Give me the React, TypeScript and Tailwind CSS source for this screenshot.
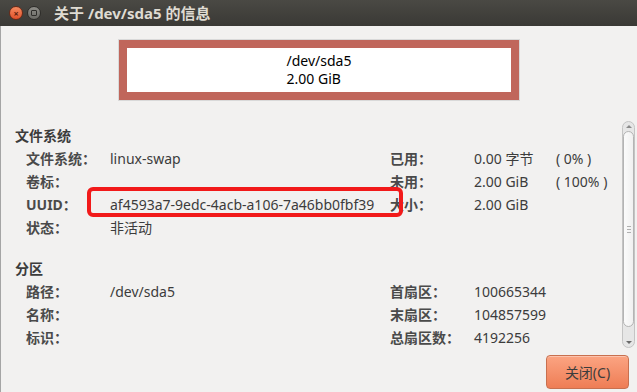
const font = "font-['Noto_Sans','Noto_Sans_CJK_SC',sans-serif]";

const fsRows = [
  { label: '文件系统：', value: 'linux-swap', rl: '已用：', rv: '0.00 字节', pct: '( 0% )' },
  { label: '卷标：', value: '', rl: '未用：', rv: '2.00 GiB', pct: '( 100% )' },
  { label: 'UUID：', value: 'af4593a7-9edc-4acb-a106-7a46bb0fbf39', rl: '大小：', rv: '2.00 GiB', pct: '' },
  { label: '状态：', value: '非活动', rl: '', rv: '', pct: '' },
];

const partRows = [
  { label: '路径：', value: '/dev/sda5', rl: '首扇区：', rv: '100665344', pct: '' },
  { label: '名称：', value: '', rl: '末扇区：', rv: '104857599', pct: '' },
  { label: '标识：', value: '', rl: '总扇区数：', rv: '4192256', pct: '' },
];

type Row = { label: string; value: string; rl: string; rv: string; pct: string };

function Section({ title, rows }: { title: string; rows: Row[] }) {
  return (
    <div>
      <div className="h-[23px] pl-[14px] flex items-center font-bold text-[14px] text-[#3c3c3c]">{title}</div>
      <div className="grid grid-cols-[84px_280px_84px_82px_auto] pl-[25px] text-[14px]">
        {rows.map((r, i) => (
          <div key={i} className="contents">
            <div className="h-[23px] flex items-center font-bold text-[#4a4a4a] whitespace-nowrap">{r.label}</div>
            <div className="h-[23px] flex items-center text-[#3c3c3c] whitespace-nowrap">{r.value}</div>
            <div className="h-[23px] flex items-center font-bold text-[#4a4a4a] whitespace-nowrap">{r.rl}</div>
            <div className="h-[23px] flex items-center text-[#3c3c3c] whitespace-nowrap">{r.rv}</div>
            <div className="h-[23px] flex items-center text-[#3c3c3c] whitespace-nowrap">{r.pct}</div>
          </div>
        ))}
      </div>
    </div>
  );
}

function Scrollbar() {
  return (
    <div className="w-[13px] h-[227px] mr-[2px] rounded-full border border-[#c4c4c4] bg-[#e6e6e6] flex flex-col items-center">
      <div className="h-[9px] flex items-center justify-center">
        <div className="w-0 h-0 border-l-[3px] border-r-[3px] border-b-[3px] border-l-transparent border-r-transparent border-b-[#8a8a8a]" />
      </div>
      <div className="w-[11px] h-[196px] rounded-full border border-[#b4b4b4] bg-gradient-to-r from-[#fbfbfb] to-[#f0f0f0] flex flex-col items-center justify-center gap-[2px]">
        <div className="w-[4px] h-px bg-[#b0b0b0]" />
        <div className="w-[4px] h-px bg-[#b0b0b0]" />
        <div className="w-[4px] h-px bg-[#b0b0b0]" />
      </div>
      <div className="flex-1" />
      <div className="h-[10px] flex items-center justify-center">
        <div className="w-0 h-0 border-l-[3px] border-r-[3px] border-t-[3px] border-l-transparent border-r-transparent border-t-[#6a6a6a]" />
      </div>
    </div>
  );
}

export default function App() {
  return (
    <div className={`w-[637px] h-[392px] overflow-hidden flex flex-col bg-[#f2f1f0] ${font}`}>
      {/* title bar */}
      <div className="h-[26px] shrink-0 flex items-center bg-gradient-to-b from-[#4a4944] to-[#3a3935]">
        <div className="ml-[9px] w-[14px] h-[14px] rounded-full bg-gradient-to-b from-[#f58a5f] to-[#e1502a] border border-[#6b2a18] flex items-center justify-center">
          <span className="text-[9px] leading-none font-bold text-[#5a1e0e]">×</span>
        </div>
        <div className="ml-[4px] w-[14px] h-[14px] rounded-full bg-gradient-to-b from-[#8e8d88] to-[#6b6a65] border border-[#2e2d2a] flex items-center justify-center">
          <div className="w-[6px] h-[6px] border border-[#2f2e2b] rounded-[1px]" />
        </div>
        <span className="ml-[13px] text-[15px] font-bold text-[#dfdbd2]">关于 /dev/sda5 的信息</span>
      </div>

      <div className="flex-1 flex flex-col border-l border-[#a5a5a5]">
        {/* disk graphic */}
        <div className="mt-[13px] self-center w-[402px] h-[62px] border border-[#d9d9d9] bg-[#c0665b] p-[8px]">
          <div className="h-full bg-white flex justify-center items-center">
            <div className="text-[14px] leading-[18px] text-black">
              <div>/dev/sda5</div>
              <div>2.00 GiB</div>
            </div>
          </div>
        </div>

        {/* scrolled info */}
        <div className="mt-[20px] flex relative">
          <div className="flex-1 pt-[3px] flex flex-col gap-[18px]">
            <Section title="文件系统" rows={fsRows} />
            <Section title="分区" rows={partRows} />
          </div>
          <Scrollbar />
          <div className="absolute left-[86px] top-[66px] w-[316px] h-[30px] border-[4px] border-[#f21a1a] rounded-[6px] pointer-events-none" />
        </div>

        {/* buttons */}
        <div className="mt-[6px] flex justify-end pr-[8px]">
          <button className="w-[83px] h-[34px] rounded-[4px] border border-[#c8704f] bg-gradient-to-b from-[#fba482] to-[#ee7d55] text-[14px] text-[#3c3c3c] shadow-[inset_0_1px_0_rgba(255,255,255,0.35)]">
            关闭(C)
          </button>
        </div>
      </div>
    </div>
  );
}
